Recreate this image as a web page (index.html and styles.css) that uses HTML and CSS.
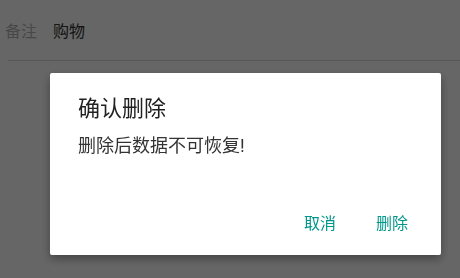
FILE: index.html
```html
<!DOCTYPE html>
<html lang="zh-CN">
<head>
    <meta charset="UTF-8">
    <meta name="viewport" content="width=device-width, initial-scale=1.0">
    <title>确认删除</title>
    <link rel="stylesheet" href="styles.css">
</head>
<body>
    <div class="page">
        <div class="field">
            <span class="field-label">备注</span>
            <span class="field-value">购物</span>
        </div>
    </div>

    <div class="overlay">
        <div class="dialog">
            <h2 class="dialog-title">确认删除</h2>
            <p class="dialog-message">删除后数据不可恢复!</p>
            <div class="dialog-actions">
                <button class="dialog-button">取消</button>
                <button class="dialog-button">删除</button>
            </div>
        </div>
    </div>
</body>
</html>
```

FILE: styles.css
```css
body {
    margin: 0;
    background-color: #fff;
    font-family: Roboto, "Noto Sans CJK SC", sans-serif;
    width: 460px;
    height: 278px;
    overflow: hidden;
}
.page {
    padding-left: 8px;
}
.field {
    display: flex;
    align-items: center;
    height: 60px;
    border-bottom: 1px solid #d8d8d8;
}
.field-label {
    font-size: 16px;
    color: #b4b4b4;
    margin-left: -3px;
    margin-right: 16px;
}
.field-value {
    font-size: 16px;
    color: #333;
}
.overlay {
    position: fixed;
    top: 0;
    left: 0;
    right: 0;
    bottom: 0;
    background-color: rgba(0, 0, 0, 0.6);
    padding: 73px 0 0 50px;
}
.dialog {
    width: 391px;
    height: 182px;
    box-sizing: border-box;
    background-color: #fff;
    border-radius: 2px;
    box-shadow: 0 4px 10px rgba(0, 0, 0, 0.35);
    padding: 22px 24px 0 28px;
    display: flex;
    flex-direction: column;
}
.dialog-title {
    margin: 0;
    font-size: 22px;
    font-weight: normal;
    color: #212121;
    line-height: 28px;
}
.dialog-message {
    margin: 11px 0 0;
    font-size: 18px;
    color: #333;
    line-height: 24px;
}
.dialog-actions {
    margin-top: auto;
    margin-bottom: 20px;
    display: flex;
    justify-content: flex-end;
    gap: 40px;
    padding-right: 9px;
}
.dialog-button {
    background: none;
    border: none;
    padding: 0;
    font-family: inherit;
    font-size: 16px;
    color: #00968a;
    cursor: pointer;
    line-height: 22px;
}
```
